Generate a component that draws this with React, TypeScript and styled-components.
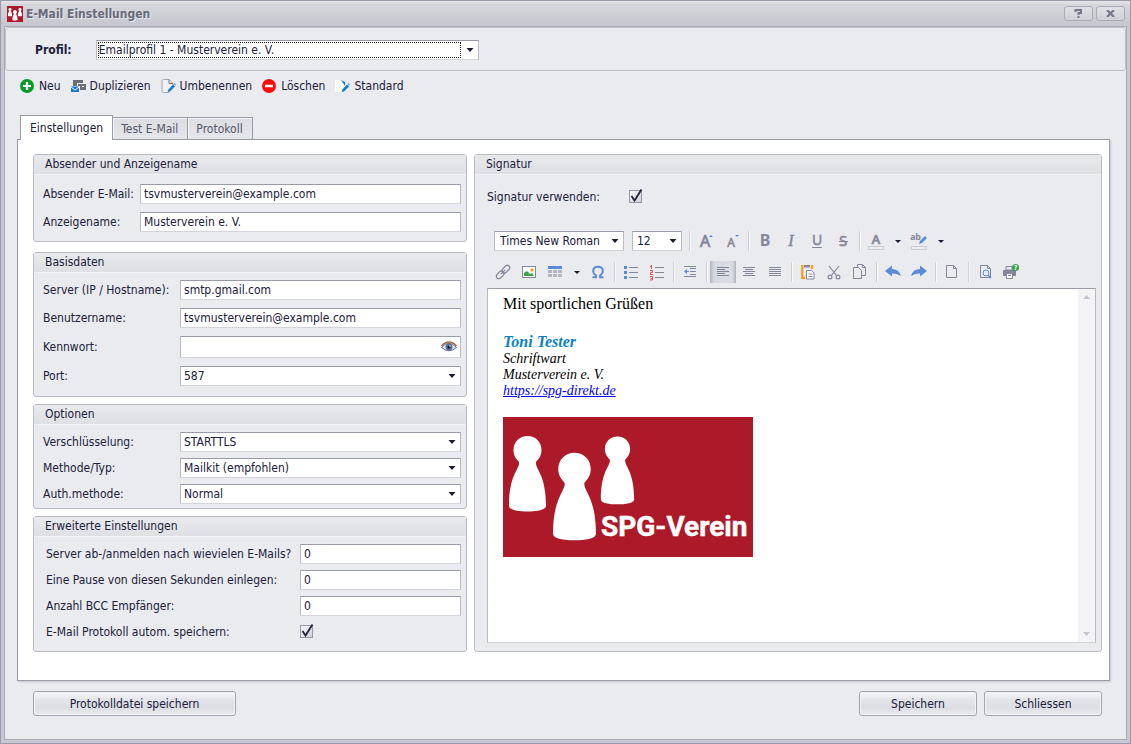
import React, { useId, useState } from 'react';
import styled, { createGlobalStyle, css } from 'styled-components';

const font = '"DejaVu Sans Condensed", "Noto Sans", sans-serif';

const c = {
  text: '#20203a',
  face: '#eaebef',
  line: '#b9bac4',
  dark: '#9a9ba9',
  soft: '#d3d4db',
  icon: '#84869a',
  blue: '#5b8bd6',
  red: '#ac1a29',
};

const Global = createGlobalStyle`
  *, *::before, *::after { box-sizing: border-box; }
  body { margin: 0; background: ${c.face}; color: ${c.text}; font: 12px/16px ${font}; }
  button, input, select { font: inherit; color: inherit; margin: 0; }
  svg { display: block; flex: none; }
`;

const Window = styled.div`
  min-height: 100vh;
  display: flex;
  flex-direction: column;
  padding: 0 3px 3px;
  border: 1px solid ${c.dark};
  background: #c8c8d2;
`;

const TitleBar = styled.header`
  display: flex;
  align-items: center;
  gap: 3px;
  height: 25px;
  margin: 0 -3px;
  padding: 0 5px 0 6px;
  background: linear-gradient(#e4e4e9, #d6d7dc 15%, #c5c6cf);
`;

const Title = styled.h1`
  flex: 1;
  margin: 0;
  font-size: 12px;
  line-height: 16px;
  color: #686a7a;
  text-shadow: 1px 1px 0 #e6e6ec;
`;

const CaptionButton = styled.button`
  display: grid;
  place-items: center;
  width: 29px;
  height: 15px;
  padding: 0;
  border: 1px solid #a9aab5;
  border-radius: 3px;
  background: linear-gradient(#e0e1e6, #cfd0d7);
`;

const Client = styled.main`
  flex: 1;
  display: flex;
  flex-direction: column;
  border: 1px solid #a9aab6;
  background: ${c.face};
`;

const ProfileBar = styled.div`
  display: flex;
  align-items: center;
  gap: 24px;
  height: 44px;
  padding: 1px 29px 0;
  border: 1px solid #bfc0c9;
  border-radius: 3px;
`;

const ProfileLabel = styled.label`
  font-weight: bold;
`;

const Actions = styled.div`
  display: flex;
  gap: 10px;
  padding: 6px 15px 21px;
`;

const Action = styled.button`
  display: flex;
  align-items: center;
  gap: 4px;
  height: 17px;
  padding: 0;
  border: 0;
  background: none;
`;

const Tabs = styled.div`
  display: flex;
  align-items: flex-end;
  padding: 0 15px;
`;

const Tab = styled.button<{ $active: boolean }>`
  height: 22px;
  padding: 0 9px 0 8px;
  border: 1px solid ${c.dark};
  border-bottom: 0;
  margin-right: -1px;
  background: linear-gradient(#dcdde2, #e6e7eb);
  box-shadow: inset 1px 1px 0 #f6f6f9;
  color: #55566a;
  ${p => p.$active && css`
    height: 25px;
    padding: 0 9px 1px;
    margin-bottom: -1px;
    background: #fff;
    box-shadow: none;
    color: ${c.text};
    z-index: 1;
  `}
`;

const Page = styled.section`
  display: grid;
  grid-template-columns: 434px 1fr;
  gap: 7px;
  margin: 0 16px 0 12px;
  padding: 14px 7px 28px 15px;
  border: 1px solid ${c.dark};
  background: #fff;
  box-shadow: 1px 1px 2px #c6c7cf;
`;

const Column = styled.div`
  display: flex;
  flex-direction: column;
  gap: 7px;
  min-width: 0;
`;

const Group = styled.section<{ $after?: number }>`
  display: flex;
  flex-direction: column;
  flex: ${p => (p.$after === undefined ? 1 : 'none')};
  margin-bottom: ${p => p.$after ?? 0}px;
  border: 1px solid ${c.line};
  border-radius: 3px;
  background: ${c.face};
`;

const GroupTitle = styled.h2`
  margin: 0;
  padding: 1px 11px 2px;
  font-size: 12px;
  line-height: 16px;
  font-weight: normal;
  background: linear-gradient(#e8e9ec, #dfe0e5);
  border-bottom: 1px solid #f2f2f5;
`;

const Fields = styled.div<{ $gap: number; $top: number; $bottom: number; $left?: number }>`
  display: flex;
  flex-direction: column;
  gap: ${p => p.$gap}px;
  padding: ${p => p.$top}px 5px ${p => p.$bottom}px ${p => p.$left ?? 9}px;
`;

const Row = styled.div<{ $label: number }>`
  display: grid;
  grid-template-columns: ${p => p.$label}px 1fr;
  align-items: center;
  min-height: 20px;
  white-space: nowrap;
`;

const field = css`
  border: 1px solid ${c.line};
  border-top-color: ${c.dark};
  border-bottom-color: ${c.soft};
  background: #fff;
`;

const TextInput = styled.input`
  ${field}
  width: 100%;
  min-width: 0;
  height: 20px;
  padding: 0 3px;
  border-radius: 0;
  outline: none;
`;

const PasswordBox = styled.div`
  ${field}
  display: flex;
  align-items: center;
  height: 22px;
  padding-right: 3px;
`;

const PasswordInput = styled.input`
  flex: 1;
  min-width: 0;
  padding: 0 3px;
  border: 0;
  outline: none;
  background: none;
`;

const IconButton = styled.button`
  padding: 0;
  border: 0;
  background: none;
`;

const SelectBox = styled.div<{ $width?: number }>`
  ${field}
  display: grid;
  grid-template: 18px / 1fr;
  align-items: center;
  width: ${p => (p.$width ? `${p.$width}px` : 'auto')};
  > * { grid-area: 1 / 1; }
  > svg { justify-self: end; margin-right: 4px; pointer-events: none; }
`;

const SelectControl = styled.select<{ $inset: number }>`
  appearance: none;
  width: 100%;
  height: 18px;
  padding: 0 16px 0 ${p => p.$inset}px;
  border: 0;
  outline: none;
  background: none;
`;

const FocusFrame = styled.span`
  align-self: stretch;
  margin: 1px 17px 1px 1px;
  border: 1px dotted #222;
  pointer-events: none;
`;

const CheckBox = styled.span`
  display: grid;
  align-items: start;
  width: 16px;
  height: 14px;
  > * { grid-area: 1 / 1; }
  > svg { pointer-events: none; }
`;

const CheckInput = styled.input`
  appearance: none;
  width: 13px;
  height: 13px;
  border: 1px solid #9697a5;
  background: linear-gradient(135deg, #f7f7f9, #cfd0d8);
`;

const SignatureRow = styled.div`
  display: grid;
  grid-template-columns: 142px 1fr;
  align-items: center;
  height: 20px;
  margin: 12px 12px 0;
`;

const Toolbar = styled.div<{ $left: number; $top: number }>`
  display: flex;
  align-items: center;
  height: 24px;
  margin: ${p => p.$top}px 0 0 ${p => p.$left}px;
`;

const FontChoices = styled.div`
  display: flex;
  gap: 8px;
  margin-right: 4px;
`;

const Tool = styled.button<{ $pressed?: boolean }>`
  display: grid;
  place-items: center;
  width: 26px;
  height: 22px;
  padding: 0;
  border: 0;
  background: ${p => (p.$pressed
    ? 'linear-gradient(90deg, #b0b3bf, #d5d8df 15%, #dadde3 85%, #b0b3bf)'
    : 'none')};
`;

const ToolMenu = styled(Tool)`
  width: 17px;
`;

const Divider = styled.span`
  width: 7px;
  height: 20px;
  background: linear-gradient(90deg, transparent 3px, #cfd0d7 3px 4px, #f8f8fa 4px 5px, transparent 5px);
`;

const Editor = styled.div`
  ${field}
  flex: 1;
  display: flex;
  margin: 4px 5px 8px 12px;
`;

const Letter = styled.div`
  flex: 1;
  padding: 5px 15px;
  outline: none;
  color: #000;
  font: 16px/19px "Liberation Serif", serif;
  p { margin: 0 0 19px; }
`;

const Name = styled.strong`
  display: block;
  font-style: italic;
  color: #0a82c8;
`;

const Contact = styled.address`
  margin-bottom: 18px;
  font-size: 14px;
  line-height: 16px;
  a { color: #00f; }
`;

const Scroll = styled.div`
  display: flex;
  flex-direction: column;
  justify-content: space-between;
  align-items: center;
  width: 17px;
  padding: 6px 0;
  background: #f4f4f7;
`;

const Footer = styled.footer`
  display: flex;
  gap: 7px;
  padding: 10px 24px 22px 28px;
`;

const PushButton = styled.button<{ $wide?: boolean }>`
  width: ${p => (p.$wide ? 203 : 118)}px;
  height: 25px;
  margin-right: ${p => (p.$wide ? 'auto' : 0)};
  padding: 0;
  border: 1px solid #a3a4b1;
  border-radius: 3px;
  background: linear-gradient(#f7f7f9, #e3e4e9 35%, #dcdee4 70%, #ebecef);
  box-shadow: inset 0 0 0 1px #f3f3f6;
`;

const Arrow = () => (
  <svg width="8" height="4" viewBox="0 0 8 4"><path d="M0.5 0h7L4 4z" fill="#1c1c30" /></svg>
);

const pawn = (x: number, y: number, s: number) => (
  <path
    transform={`translate(${x} ${y}) scale(${s})`}
    d="M0 -14C8 -14 14 -8 14 0C14 6 11 9 8.500 12C7.500 19 18.500 24 18.500 56C18.500 60 9 61.500 0 61.500C-9 61.500 -18.500 60 -18.500 56C-18.500 24 -7.500 19 -8.500 12C-11 9 -14 6 -14 0C-14 -8 -8 -14 0 -14z"
    fill="#fff"
  />
);

const AppLogo = () => (
  <svg width="16" height="16" viewBox="0 0 16 16">
    <rect width="16" height="16" fill={c.red} />
    {pawn(3, 3.5, 0.11)}{pawn(13, 3.5, 0.11)}{pawn(8, 6, 0.14)}
  </svg>
);

const ClubLogo = () => (
  <svg width="250" height="140" viewBox="0 0 250 140" role="img" aria-label="SPG-Verein">
    <rect width="250" height="140" fill={c.red} />
    {pawn(24.5, 33, 1)}
    {pawn(71.500, 52, 1.16)}
    {pawn(114.500, 32, 0.9)}
    <text x="98" y="119" fill="#fff" stroke="#fff" strokeWidth="0.5" fontFamily='Roboto, "Liberation Sans", sans-serif' fontWeight="bold" fontSize="28">SPG-Verein</text>
  </svg>
);

const Eye = () => (
  <svg width="16" height="12" viewBox="0 0 16 12">
    <path d="M0.500 6.500Q8 -2 15.500 6.500Q8 13 0.500 6.500z" fill="#e4e8f0" stroke="#5d6d9c" />
    <path d="M0.500 5Q8 -3 15.500 5" fill="none" stroke="#a8683f" strokeWidth="1.500" />
    <circle cx="8" cy="6" r="3.500" fill="#58719f" /><circle cx="8" cy="6" r="1.600" fill="#152038" />
    <circle cx="9" cy="5" r="0.800" fill="#fff" />
  </svg>
);

const Pencil = () => (
  <g><path d="M7.500 11.500L12 6.500L14 8.500L9 13.500L6.500 14z" fill="#1778d4" /><path d="M12.500 6L13.500 5L15 6.500L14.300 7.800z" fill="#5aa7ec" /></g>
);

const actionIcons: Record<string, React.ReactNode> = {
  Neu: <><circle cx="7" cy="8" r="7" fill="#0c9a2b" /><path d="M7 4v8M3 8h8" stroke="#fff" strokeWidth="2.200" /></>,
  Duplizieren: <><path d="M2 2h10v3H6v3H2z" fill="#6d6d73" /><path d="M7 6h8v6H9V8H7z" fill="#6d6d73" /><path d="M11 8.500h2" stroke="#fff" /><path d="M0 8.500h8V14H0z" fill="#1778d4" /><path d="M0 9l4 3 4-3" fill="none" stroke="#fff" /></>,
  Umbenennen: <><path d="M8 14.500H2.500Q1 14.500 1 13V3Q1 1.500 2.500 1.500H8L12 5.500V7" fill="#f1f1f4" stroke="#a5a6af" /><path d="M8 1.500v4h4" fill="none" stroke="#6f7079" /><Pencil /></>,
  'Löschen': <><circle cx="7" cy="8" r="7" fill="#fb0d0d" /><path d="M3 8h8" stroke="#fff" strokeWidth="2.500" /></>,
  Standard: <><path d="M0 2h6l3 3v9H0z" fill="#fdfdfe" /><path d="M6 2l4 2v4z" fill="#1778d4" /><Pencil /></>,
};

const PageShape = ({ x = 0, y = 0, w = 11, h = 13 }) => (
  <path d={`M${x + 0.5} ${y + 0.5}h${w - 4}l3 3v${h - 4}h-${w - 1}zM${x + w - 3.5} ${y + 0.5}v3h3`} fill="none" stroke={c.icon} />
);

const lines = (rows: number[][]) => (
  <path d={rows.map(([x, y, w]) => `M${x} ${y + 0.5}h${w}`).join('')} stroke={c.icon} fill="none" />
);

const glyph = (s: string, x: number, y: number, size: number, extra: React.SVGProps<SVGTextElement> = {}) => (
  <text x={x} y={y} fontSize={size} fontFamily='"Noto Sans", sans-serif' fill={c.icon} textAnchor="middle" {...extra}>{s}</text>
);

const toolIcons: Record<string, React.ReactNode> = {
  grow: <>{glyph('A', 7, 14, 16, { stroke: c.icon, strokeWidth: 0.7 })}<path d="M11 4l2-2 2 2z" fill={c.blue} /></>,
  shrink: <>{glyph('A', 7, 14, 12, { stroke: c.icon, strokeWidth: 0.5 })}<path d="M11 2h4l-2 2z" fill={c.blue} /></>,
  bold: glyph('B', 8, 13, 16, { fontWeight: 'bold' }),
  italic: glyph('I', 8, 13, 16, { fontStyle: 'italic', fontFamily: '"Liberation Serif", serif', stroke: c.icon, strokeWidth: 0.4 }),
  underline: <>{glyph('U', 8, 12, 14, { stroke: c.icon, strokeWidth: 0.5 })}<path d="M3 14.500h10" stroke={c.icon} /></>,
  strike: <>{glyph('S', 8, 13, 15, { stroke: c.icon, strokeWidth: 0.5 })}<path d="M4 8.500h9" stroke={c.icon} /></>,
  color: <>{glyph('A', 8, 11, 13, { stroke: c.icon, strokeWidth: 0.7 })}<rect x="0.500" y="13.500" width="15" height="3" fill="none" stroke="#cccdd3" /></>,
  highlight: <>{glyph('ab', 4.500, 7, 9, { fontWeight: 'bold' })}<path d="M8 11l1-3 5-5 2 2-5 5z" fill={c.blue} /><rect x="0.500" y="13.500" width="15" height="3" fill="none" stroke="#cccdd3" /></>,
  link: <g fill="none" stroke={c.icon} strokeWidth="1.200" transform="rotate(-45 8 8)"><rect x="-0.500" y="5.500" width="9" height="5" rx="2.500" /><rect x="7.500" y="5.500" width="9" height="5" rx="2.500" /><path d="M5 8h6" /></g>,
  image: <><rect x="1.500" y="2.500" width="13" height="11" fill="#fafafc" stroke={c.icon} /><path d="M3 12V9l3-2 3 3 2-1 2 3z" fill="#39a34b" /><circle cx="11" cy="6" r="1.600" fill="#f99b1c" /></>,
  table: <><path d="M1 2h14v3H1z" fill={c.blue} /><path d="M1 6h4v3H1zM6 6h4v3H6zM11 6h4v3h-4zM1 10h4v3H1zM6 10h4v3H6zM11 10h4v3h-4z" fill="#b3b4bf" /></>,
  symbol: <path d="M2.500 13.200H6V11.500C1.500 8.500 2.500 2.800 8 2.800S14.500 8.500 10 11.500V13.200H13.500" fill="none" stroke={c.blue} strokeWidth="1.900" />,
  bullets: <><path d="M1 2h3v3H1zM1 7h3v3H1zM1 12h3v3H1z" fill={c.blue} />{lines([[6, 3, 9], [6, 8, 9], [6, 13, 9]])}</>,
  numbers: <><path d="M1 2.500h1.500M2.500 1v4M1 6.500h2.500v2h-2v2h2.500M1 12.500h2.500v3.500h-2.500M1.500 14.300h2" fill="none" stroke="#dd4a5b" />{lines([[6, 3, 9], [6, 8, 9], [6, 13, 9]])}</>,
  indent: <>{lines([[2, 2, 12], [8, 4, 6], [8, 7, 6], [8, 10, 6], [2, 12, 12]])}<path d="M2 7.500L5 5v2h2v1H5v2z" fill={c.blue} /></>,
  left: lines([[2, 3, 12], [2, 5, 8], [2, 7, 12], [2, 9, 8], [2, 11, 12]]),
  center: lines([[2, 3, 12], [4, 5, 8], [2, 7, 12], [4, 9, 8], [2, 11, 12]]),
  justify: lines([[2, 3, 12], [2, 5, 12], [2, 7, 12], [2, 9, 12], [2, 11, 12]]),
  paste: <><path d="M3.500 2H2.200v12H5M11 2h1v3" fill="none" stroke="#fb9b12" strokeWidth="2.200" /><path d="M4 1h6v2.500H4z" fill={c.icon} /><path d="M6.500 6.500h5l2.500 2.500v6H6.500zM8.500 10h4M8.500 12.500h4" fill="#fff" stroke={c.icon} /></>,
  cut: <g fill="none" stroke={c.icon} strokeWidth="1.200"><path d="M3 2L10.500 11.500M13 2L5.500 11.500" /><circle cx="4" cy="13" r="1.900" /><circle cx="12" cy="13" r="1.900" /></g>,
  copy: <><PageShape x={5} y={0} w={9} h={12} /><path d="M1.500 3.500h5l3 3v8h-8z" fill={c.face} stroke={c.icon} /></>,
  undo: <path d="M0 7L7 1.500V5Q14 5 16 12Q12 9 7 9.500V12.500z" fill={c.blue} />,
  redo: <path d="M16 7L9 1.500V5Q2 5 0 12Q4 9 9 9.500V12.500z" fill={c.blue} />,
  page: <PageShape x={2} y={1} w={11} h={13} />,
  preview: <><PageShape x={3} y={1} w={11} h={13} /><circle cx="9" cy="9" r="3" fill={c.face} stroke={c.blue} /><path d="M11 11l3 3" stroke={c.blue} strokeWidth="1.500" /></>,
  print: <><path d="M3 2.500h6V6H3z" fill={c.face} stroke={c.icon} /><path d="M0 6h13v6H0z" fill={c.icon} /><path d="M3.500 9.500h6v5h-6z" fill="#fff" stroke={c.icon} /><path d="M5 11.500h3" stroke={c.icon} /><circle cx="12.500" cy="3.500" r="3.500" fill="#2fa044" /><text x="12.500" y="6" fontSize="7" fontWeight="bold" textAnchor="middle" fill="#fff">?</text></>,
};

function SelectField({ id, label, options, width, inset = 3, focused }: {
  id?: string; label?: string; options: string[]; width?: number; inset?: number; focused?: boolean;
}) {
  return (
    <SelectBox $width={width}>
      <SelectControl id={id} aria-label={label} $inset={inset}>
        {options.map(o => <option key={o}>{o}</option>)}
      </SelectControl>
      {focused && <FocusFrame />}
      <Arrow />
    </SelectBox>
  );
}

function Check({ id }: { id: string }) {
  const [on, setOn] = useState(true);
  return (
    <CheckBox>
      <CheckInput id={id} type="checkbox" checked={on} onChange={e => setOn(e.target.checked)} />
      {on && <svg width="16" height="14" viewBox="0 0 16 14" overflow="visible"><path d="M2.500 6L5.500 10.500L12.500 -0.500" fill="none" stroke="#22223a" strokeWidth="1.800" /></svg>}
    </CheckBox>
  );
}

function LabeledText({ label, value, width }: { label: string; value: string; width: number }) {
  const id = useId();
  return (
    <Row $label={width}>
      <label htmlFor={id}>{label}</label>
      <TextInput id={id} defaultValue={value} />
    </Row>
  );
}

function LabeledSelect({ label, value, width }: { label: string; value: string; width: number }) {
  const id = useId();
  return (
    <Row $label={width}>
      <label htmlFor={id}>{label}</label>
      <SelectField id={id} options={[value]} />
    </Row>
  );
}

const ToolIcon = ({ name, label, pressed }: { name: string; label: string; pressed?: boolean }) => (
  <Tool type="button" aria-label={label} $pressed={pressed}>
    <svg width="16" height="16" viewBox="0 0 16 16" overflow="visible">{toolIcons[name]}</svg>
  </Tool>
);

const MenuArrow = ({ label }: { label: string }) => (
  <ToolMenu type="button" aria-label={label}>
    <svg width="6" height="3" viewBox="0 0 6 3"><path d="M0 0h6L3 3z" fill="#1c1c30" /></svg>
  </ToolMenu>
);

const ScrollArrow = ({ down }: { down?: boolean }) => (
  <svg width="7" height="4" viewBox="0 0 7 4"><path d={down ? 'M0 0h7L3.500 4z' : 'M0 4h7L3.500 0z'} fill="#c3c4cc" /></svg>
);

const tabs = ['Einstellungen', 'Test E-Mail', 'Protokoll'];

export default function App() {
  return (
    <>
      <Global />
      <Window>
        <TitleBar>
          <AppLogo />
          <Title>E-Mail Einstellungen</Title>
          <CaptionButton type="button" aria-label="Hilfe">
            <svg width="9" height="9" viewBox="0 0 9 9"><path d="M1.500 3V1H7v3H4.500v2M4.500 7v2" fill="none" stroke="#757787" strokeWidth="2" /></svg>
          </CaptionButton>
          <CaptionButton type="button" aria-label="Fenster schließen">
            <svg width="9" height="7" viewBox="0 0 9 7"><path d="M1 0l7 7M8 0L1 7" stroke="#757787" strokeWidth="2.200" /></svg>
          </CaptionButton>
        </TitleBar>
        <Client>
          <ProfileBar>
            <ProfileLabel htmlFor="profil">Profil:</ProfileLabel>
            <SelectField id="profil" options={['Emailprofil 1 - Musterverein e. V.']} width={383} inset={2} focused />
          </ProfileBar>
          <Actions>
            {Object.keys(actionIcons).map(name => (
              <Action type="button" key={name}>
                <svg width="15" height="16" viewBox="0 0 15 16">{actionIcons[name]}</svg>
                {name}
              </Action>
            ))}
          </Actions>
          <Tabs role="tablist">
            {tabs.map((t, i) => (
              <Tab key={t} type="button" role="tab" aria-selected={i === 0} $active={i === 0}>{t}</Tab>
            ))}
          </Tabs>
          <Page role="tabpanel">
            <Column>
              <Group $after={3}>
                <GroupTitle>Absender und Anzeigename</GroupTitle>
                <Fields $gap={8} $top={9} $bottom={9}>
                  <LabeledText label="Absender E-Mail:" value="tsvmusterverein@example.com" width={97} />
                  <LabeledText label="Anzeigename:" value="Musterverein e. V." width={97} />
                </Fields>
              </Group>
              <Group $after={0}>
                <GroupTitle>Basisdaten</GroupTitle>
                <Fields $gap={8} $top={7} $bottom={10}>
                  <LabeledText label="Server (IP / Hostname):" value="smtp.gmail.com" width={137} />
                  <LabeledText label="Benutzername:" value="tsvmusterverein@example.com" width={137} />
                  <Row $label={137}>
                    <label htmlFor="kennwort">Kennwort:</label>
                    <PasswordBox>
                      <PasswordInput id="kennwort" type="password" />
                      <IconButton type="button" aria-label="Kennwort anzeigen"><Eye /></IconButton>
                    </PasswordBox>
                  </Row>
                  <LabeledSelect label="Port:" value="587" width={137} />
                </Fields>
              </Group>
              <Group $after={0}>
                <GroupTitle>Optionen</GroupTitle>
                <Fields $gap={6} $top={7} $bottom={4}>
                  <LabeledSelect label="Verschlüsselung:" value="STARTTLS" width={137} />
                  <LabeledSelect label="Methode/Typ:" value="Mailkit (empfohlen)" width={137} />
                  <LabeledSelect label="Auth.methode:" value="Normal" width={137} />
                </Fields>
              </Group>
              <Group $after={0}>
                <GroupTitle>Erweiterte Einstellungen</GroupTitle>
                <Fields $gap={6} $top={7} $bottom={9} $left={12}>
                  <LabeledText label="Server ab-/anmelden nach wievielen E-Mails?" value="0" width={254} />
                  <LabeledText label="Eine Pause von diesen Sekunden einlegen:" value="0" width={254} />
                  <LabeledText label="Anzahl BCC Empfänger:" value="0" width={254} />
                  <Row $label={254}>
                    <label htmlFor="autosave">E-Mail Protokoll autom. speichern:</label>
                    <Check id="autosave" />
                  </Row>
                </Fields>
              </Group>
            </Column>
            <Column>
              <Group>
                <GroupTitle>Signatur</GroupTitle>
                <SignatureRow>
                  <label htmlFor="signatur">Signatur verwenden:</label>
                  <Check id="signatur" />
                </SignatureRow>
                <Toolbar $left={19} $top={22}>
                  <FontChoices>
                    <SelectField label="Schriftart" options={['Times New Roman']} width={130} inset={5} />
                    <SelectField label="Schriftgröße" options={['12']} width={50} inset={4} />
                  </FontChoices>
                  <Divider />
                  <ToolIcon name="grow" label="Schrift vergrößern" />
                  <ToolIcon name="shrink" label="Schrift verkleinern" />
                  <Divider />
                  <ToolIcon name="bold" label="Fett" />
                  <ToolIcon name="italic" label="Kursiv" />
                  <ToolIcon name="underline" label="Unterstrichen" />
                  <ToolIcon name="strike" label="Durchgestrichen" />
                  <Divider />
                  <ToolIcon name="color" label="Schriftfarbe" />
                  <MenuArrow label="Schriftfarbe wählen" />
                  <ToolIcon name="highlight" label="Hervorheben" />
                  <MenuArrow label="Hervorhebung wählen" />
                </Toolbar>
                <Toolbar $left={15} $top={7}>
                  <ToolIcon name="link" label="Link" />
                  <ToolIcon name="image" label="Bild" />
                  <ToolIcon name="table" label="Tabelle" />
                  <MenuArrow label="Tabellenoptionen" />
                  <ToolIcon name="symbol" label="Symbol" />
                  <Divider />
                  <ToolIcon name="bullets" label="Aufzählung" />
                  <ToolIcon name="numbers" label="Nummerierung" />
                  <Divider />
                  <ToolIcon name="indent" label="Einzug" />
                  <Divider />
                  <ToolIcon name="left" label="Linksbündig" pressed />
                  <ToolIcon name="center" label="Zentriert" />
                  <ToolIcon name="justify" label="Blocksatz" />
                  <Divider />
                  <ToolIcon name="paste" label="Einfügen" />
                  <ToolIcon name="cut" label="Ausschneiden" />
                  <ToolIcon name="copy" label="Kopieren" />
                  <Divider />
                  <ToolIcon name="undo" label="Rückgängig" />
                  <ToolIcon name="redo" label="Wiederholen" />
                  <Divider />
                  <ToolIcon name="page" label="Neues Dokument" />
                  <Divider />
                  <ToolIcon name="preview" label="Vorschau" />
                  <ToolIcon name="print" label="Drucken" />
                </Toolbar>
                <Editor>
                  <Letter contentEditable suppressContentEditableWarning role="textbox" aria-label="Signaturtext" spellCheck={false}>
                    <p>Mit sportlichen Grüßen</p>
                    <Name>Toni Tester</Name>
                    <Contact>
                      Schriftwart<br />
                      Musterverein e. V.<br />
                      <a href="https://spg-direkt.de">https://spg-direkt.de</a>
                    </Contact>
                    <ClubLogo />
                  </Letter>
                  <Scroll aria-hidden="true"><ScrollArrow /><ScrollArrow down /></Scroll>
                </Editor>
              </Group>
            </Column>
          </Page>
          <Footer>
            <PushButton type="button" $wide>Protokolldatei speichern</PushButton>
            <PushButton type="button">Speichern</PushButton>
            <PushButton type="button">Schliessen</PushButton>
          </Footer>
        </Client>
      </Window>
    </>
  );
}
